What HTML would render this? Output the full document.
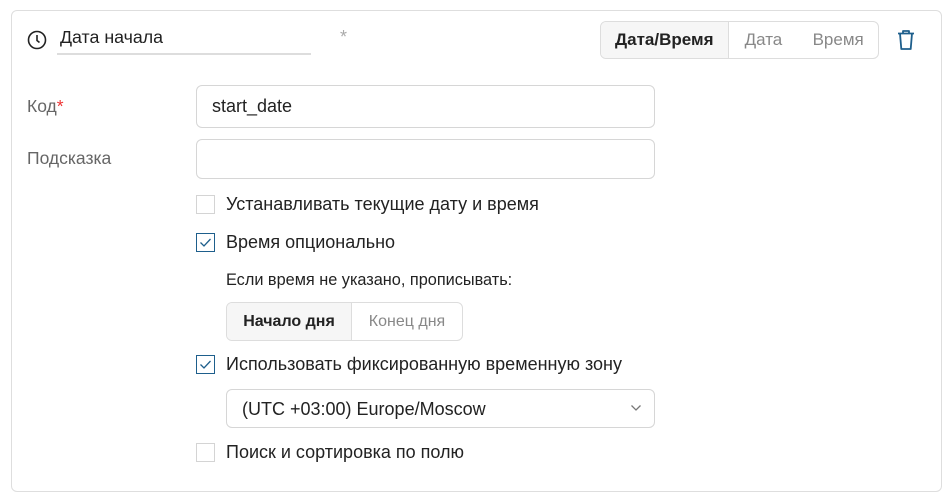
<!DOCTYPE html>
<html><head><meta charset="utf-8"><style>
*{box-sizing:border-box;margin:0;padding:0}
body{width:952px;height:504px;background:#fff;font-family:"Liberation Sans",sans-serif;color:#222;position:relative;overflow:hidden}
.a{position:absolute}
.card{left:11px;top:10px;width:931px;height:482px;border:1px solid #dedede;border-radius:6px}
.lbl{font-size:17.5px;color:#666}
.inp{border:1px solid #d6d6d6;border-radius:6px;background:#fff}
.cb{width:19px;height:19px;border:1px solid #d4d4d4;background:#fff}
.cb.on{border-color:#1e5f8c}
.t{font-size:18px;color:#222;white-space:nowrap}
</style></head><body>
<div class="a card"></div>
<svg class="a" style="left:27px;top:30px" width="20" height="20" viewBox="0 0 20 20"><circle cx="10" cy="10" r="8.5" fill="none" stroke="#222" stroke-width="1.6"/><path d="M10 5v5.5l2.5 2" fill="none" stroke="#222" stroke-width="1.6"/></svg>
<div class="a t" style="left:60px;top:27px;font-size:17.8px">Дата начала</div>
<div class="a" style="left:57px;top:53px;width:254px;height:2px;background:#ddd"></div>
<div class="a" style="left:340px;top:27px;color:#aaa;font-size:18px">*</div>
<div class="a" style="left:600px;top:21px;width:279px;height:38px;border:1px solid #ddd;border-radius:6px;overflow:hidden;display:flex;font-size:17px">
<div style="width:128px;background:#f6f6f6;border-right:1px solid #ddd;font-weight:bold;text-align:center;line-height:36px;color:#222">Дата/Время</div>
<div style="width:70px;text-align:center;line-height:36px;color:#888">Дата</div>
<div style="width:80px;text-align:center;line-height:36px;color:#888">Время</div>
</div>
<svg class="a" style="left:896px;top:29px" width="20" height="22" viewBox="0 0 20 22"><path d="M2 4.5h16M7 4.5V2h6v2.5M4 4.5l1.3 15.5h9.4L16 4.5" fill="none" stroke="#1e5f8c" stroke-width="1.8" stroke-linejoin="round"/></svg>
<div class="a lbl" style="left:27px;top:96px">Код<span style="color:#e33">*</span></div>
<div class="a inp" style="left:196px;top:85px;width:459px;height:43px"></div>
<div class="a t" style="left:212px;top:96px">start_date</div>
<div class="a lbl" style="left:27px;top:148px">Подсказка</div>
<div class="a inp" style="left:196px;top:139px;width:459px;height:40px"></div>
<div class="a cb" style="left:196px;top:195px"></div>
<div class="a t" style="left:226px;top:194px">Устанавливать текущие дату и время</div>
<div class="a cb on" style="left:196px;top:233px"><svg width="17" height="17" viewBox="0 0 17 17"><path d="M3.5 8.5l3.5 3.5 6.5-7" fill="none" stroke="#1e5f8c" stroke-width="1.3"/></svg></div>
<div class="a t" style="left:226px;top:232px">Время опционально</div>
<div class="a t" style="left:226px;top:271px;font-size:16.3px">Если время не указано, прописывать:</div>
<div class="a" style="left:226px;top:302px;width:237px;height:39px;border:1px solid #ddd;border-radius:6px;overflow:hidden;display:flex;font-size:16px">
<div style="width:125px;background:#f6f6f6;border-right:1px solid #ddd;font-weight:bold;text-align:center;line-height:37px">Начало дня</div>
<div style="flex:1;text-align:center;line-height:37px;color:#888">Конец дня</div>
</div>
<div class="a cb on" style="left:196px;top:355px"><svg width="17" height="17" viewBox="0 0 17 17"><path d="M3.5 8.5l3.5 3.5 6.5-7" fill="none" stroke="#1e5f8c" stroke-width="1.3"/></svg></div>
<div class="a t" style="left:226px;top:354px">Использовать фиксированную временную зону</div>
<div class="a inp" style="left:226px;top:389px;width:429px;height:39px"></div>
<div class="a t" style="left:242px;top:399px">(UTC +03:00) Europe/Moscow</div>
<svg class="a" style="left:630px;top:404px" width="12" height="8" viewBox="0 0 12 8"><path d="M1.5 1.5l4.5 4.5 4.5-4.5" fill="none" stroke="#777" stroke-width="1.3"/></svg>
<div class="a cb" style="left:196px;top:443px"></div>
<div class="a t" style="left:226px;top:442px">Поиск и сортировка по полю</div>
</body></html>
